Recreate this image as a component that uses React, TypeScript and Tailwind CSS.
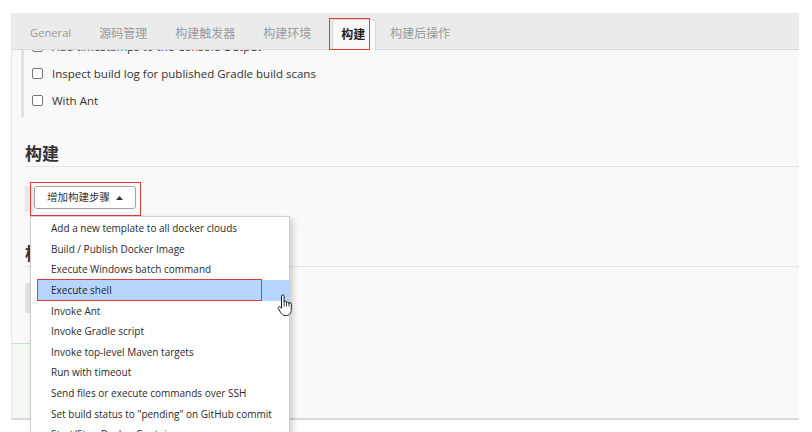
import React from "react";

const tabs = ["General", "源码管理", "构建触发器", "构建环境", "构建", "构建后操作"];

const options = [
  "Add timestamps to the Console Output",
  "Inspect build log for published Gradle build scans",
  "With Ant",
];

const steps = [
  "Add a new template to all docker clouds",
  "Build / Publish Docker Image",
  "Execute Windows batch command",
  "Execute shell",
  "Invoke Ant",
  "Invoke Gradle script",
  "Invoke top-level Maven targets",
  "Run with timeout",
  "Send files or execute commands over SSH",
  'Set build status to "pending" on GitHub commit',
  "Start/Stop Docker Containers",
];

function Section({ title }: { title: string }) {
  return (
    <div className="ml-[13px] h-[26px] flex items-center border-b border-[#e3e3e3] text-[17px] font-semibold text-[#333]">
      {title}
    </div>
  );
}

function HandCursor() {
  return (
    <svg width="16" height="23" viewBox="0 0 16 23" className="absolute left-[277px] top-[294px]">
      <path
        d="M4.5 2.2C4.5 1.3 5.1.8 5.8.8S7.1 1.3 7.1 2.2V8.2C7.1 7.5 7.6 7 8.3 7S9.5 7.5 9.5 8.2V9C9.5 8.3 10 7.8 10.7 7.8S11.9 8.3 11.9 9V9.8C11.9 9.1 12.4 8.7 13.1 8.7S14.3 9.2 14.3 9.9V15.5C14.3 18.5 12.6 21.5 9.6 21.5H8C6 21.5 4.9 20.3 3.8 18.7L1.3 14.6C.9 13.9 1.1 13.1 1.8 12.7 2.4 12.4 3.1 12.6 3.6 13.2L4.5 14.3Z"
        fill="#fff"
        stroke="#1b1b1b"
        strokeWidth="1"
        strokeLinejoin="round"
      />
      <path d="M7.1 8.2V12.5M9.5 9V12.5M11.9 9.8V12.5" stroke="#1b1b1b" strokeWidth="0.8" fill="none" />
    </svg>
  );
}

export default function App() {
  return (
    <div
      className="relative w-[812px] h-[432px] overflow-hidden bg-white text-[#333]"
      style={{ fontFamily: '"Open Sans", "Noto Sans CJK SC", sans-serif' }}
    >
      <div className="ml-[11px] mt-[13px] w-[788px] h-[407px] flex flex-col bg-[#f9f9f9] border-l border-[#e6e6e6] border-b-2 border-b-[#d9d9d9]">
        {/* tab bar */}
        <div className="relative z-10 h-[37px] flex items-end bg-[#ebebeb] border-b border-[#d8d8d8] pl-[4px]">
          {tabs.map((t) =>
            t === "构建" ? (
              <div key={t} className="relative h-[31px] pl-[8px] pr-[10px] ml-[7px] -mb-px flex items-center bg-[#f9f9f9] border border-b-0 border-[#d6d6d6] rounded-t-[4px] text-[12px] font-bold text-[#222]">
                {t}
                <span className="absolute -left-[4px] -top-[2px] w-[41px] h-[32px] border border-[#e53935]" />
              </div>
            ) : (
              <div
                key={t}
                className={
                  t === "General"
                    ? "h-[31px] px-[14px] flex items-center text-[11.2px] text-[#9a9a9a]"
                    : "h-[31px] px-[14px] flex items-center text-[12px] text-[#9a9a9a]"
                }
              >
                {t}
              </div>
            )
          )}
        </div>

        {/* content */}
        <div className="flex-1 overflow-hidden">
          <div className="ml-[9px] border-l-[3px] border-[#e2e2e2] pb-[3px] -mt-[17px]">
            {options.map((o) => (
              <div key={o} className="h-[27px] flex items-center pl-[8px] text-[11.5px] text-[#333]">
                <span className="w-[11px] h-[11px] border border-[#767676] rounded-[2px] bg-white mr-[9px]" />
                {o}
              </div>
            ))}
          </div>

          <div className="mt-[24px]">
            <Section title="构建" />
          </div>

          <div className="mt-[19px] ml-[13px] flex">
            <div className="w-[9px] h-[26px] bg-[#e8e8e8]" />
            <div className="relative">
              <div className="w-[102px] h-[23px] flex items-center justify-center gap-[6px] bg-white border border-[#9ea4ab] rounded-[3px] text-[10.5px] text-[#333]">
                增加构建步骤
                <svg width="7" height="4" viewBox="0 0 7 4">
                  <path d="M0 4L3.5 0L7 4Z" fill="#333" />
                </svg>
              </div>
              <span className="absolute -left-[4px] -top-[4px] w-[111px] h-[34px] border border-[#e53935]" />
            </div>
          </div>

          <div className="mt-[29px]">
            <Section title="构建后操作" />
          </div>

          <div className="mt-[16px] ml-[13px] w-[150px] h-[30px] bg-[#e1e1e1] rounded-[2px]" />

          <div className="mt-[30px] w-[220px] h-[76px] bg-[#f2f8f2] border border-l-0 border-[#c9dfc9]" />
        </div>
      </div>

      {/* dropdown */}
      <div className="absolute left-[30px] top-[216px] w-[260px] h-[230px] bg-white border border-[#cdcdcd] shadow-[3px_3px_6px_rgba(0,0,0,0.18)] pt-[1.5px]">
        {steps.map((s) =>
          s === "Execute shell" ? (
            <div key={s} className="relative ml-[6px] h-[20.6px] flex items-center pl-[14px] bg-[#b5d5fd] text-[10px] text-[#1f1f1f]">
              {s}
              <span className="absolute left-0 -top-[1px] w-[225px] h-[22px] border border-[#e53935]" />
            </div>
          ) : (
            <div key={s} className="ml-[6px] h-[20.6px] flex items-center pl-[14px] text-[10px] text-[#2a2a2a]">
              {s}
            </div>
          )
        )}
      </div>

      <HandCursor />
    </div>
  );
}
